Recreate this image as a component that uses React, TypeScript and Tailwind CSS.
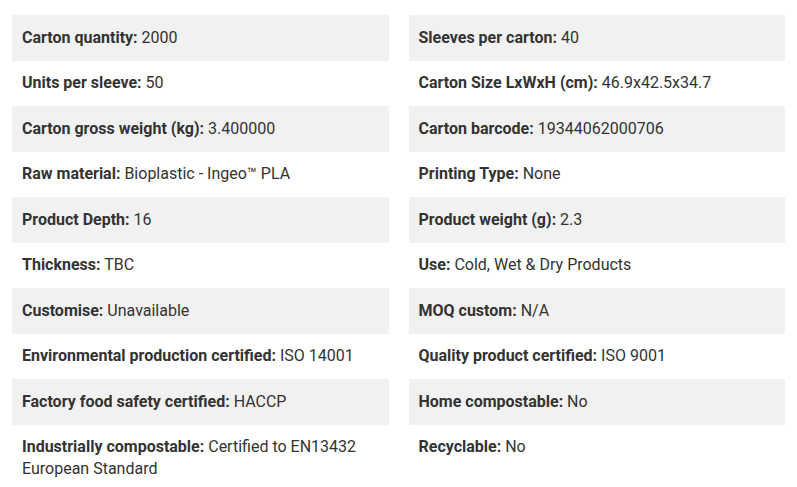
const LEFT: [string, string][] = [
  ["Carton quantity:", "2000"],
  ["Units per sleeve:", "50"],
  ["Carton gross weight (kg):", "3.400000"],
  ["Raw material:", "Bioplastic - Ingeo™ PLA"],
  ["Product Depth:", "16"],
  ["Thickness:", "TBC"],
  ["Customise:", "Unavailable"],
  ["Environmental production certified:", "ISO 14001"],
  ["Factory food safety certified:", "HACCP"],
  ["Industrially compostable:", "Certified to EN13432 European Standard"],
];

const RIGHT: [string, string][] = [
  ["Sleeves per carton:", "40"],
  ["Carton Size LxWxH (cm):", "46.9x42.5x34.7"],
  ["Carton barcode:", "19344062000706"],
  ["Printing Type:", "None"],
  ["Product weight (g):", "2.3"],
  ["Use:", "Cold, Wet & Dry Products"],
  ["MOQ custom:", "N/A"],
  ["Quality product certified:", "ISO 9001"],
  ["Home compostable:", "No"],
  ["Recyclable:", "No"],
];

function SpecList({ items }: { items: [string, string][] }) {
  return (
    <ul className="flex flex-col">
      {items.map(([label, value], i) => (
        <li
          key={label}
          className={`px-[10px] py-[11.75px] leading-[22px] ${i % 2 === 0 ? "bg-[#f1f1f1]" : "bg-white"}`}
        >
          <strong className="font-bold">{label}</strong> <span className="font-normal">{value}</span>
        </li>
      ))}
    </ul>
  );
}

export default function App() {
  return (
    <div className="min-h-screen bg-white px-3 pt-[15px] text-[16px] text-[#333] font-['Roboto',sans-serif]">
      <div className="grid grid-cols-2 gap-x-5">
        <SpecList items={LEFT} />
        <SpecList items={RIGHT} />
      </div>
    </div>
  );
}
